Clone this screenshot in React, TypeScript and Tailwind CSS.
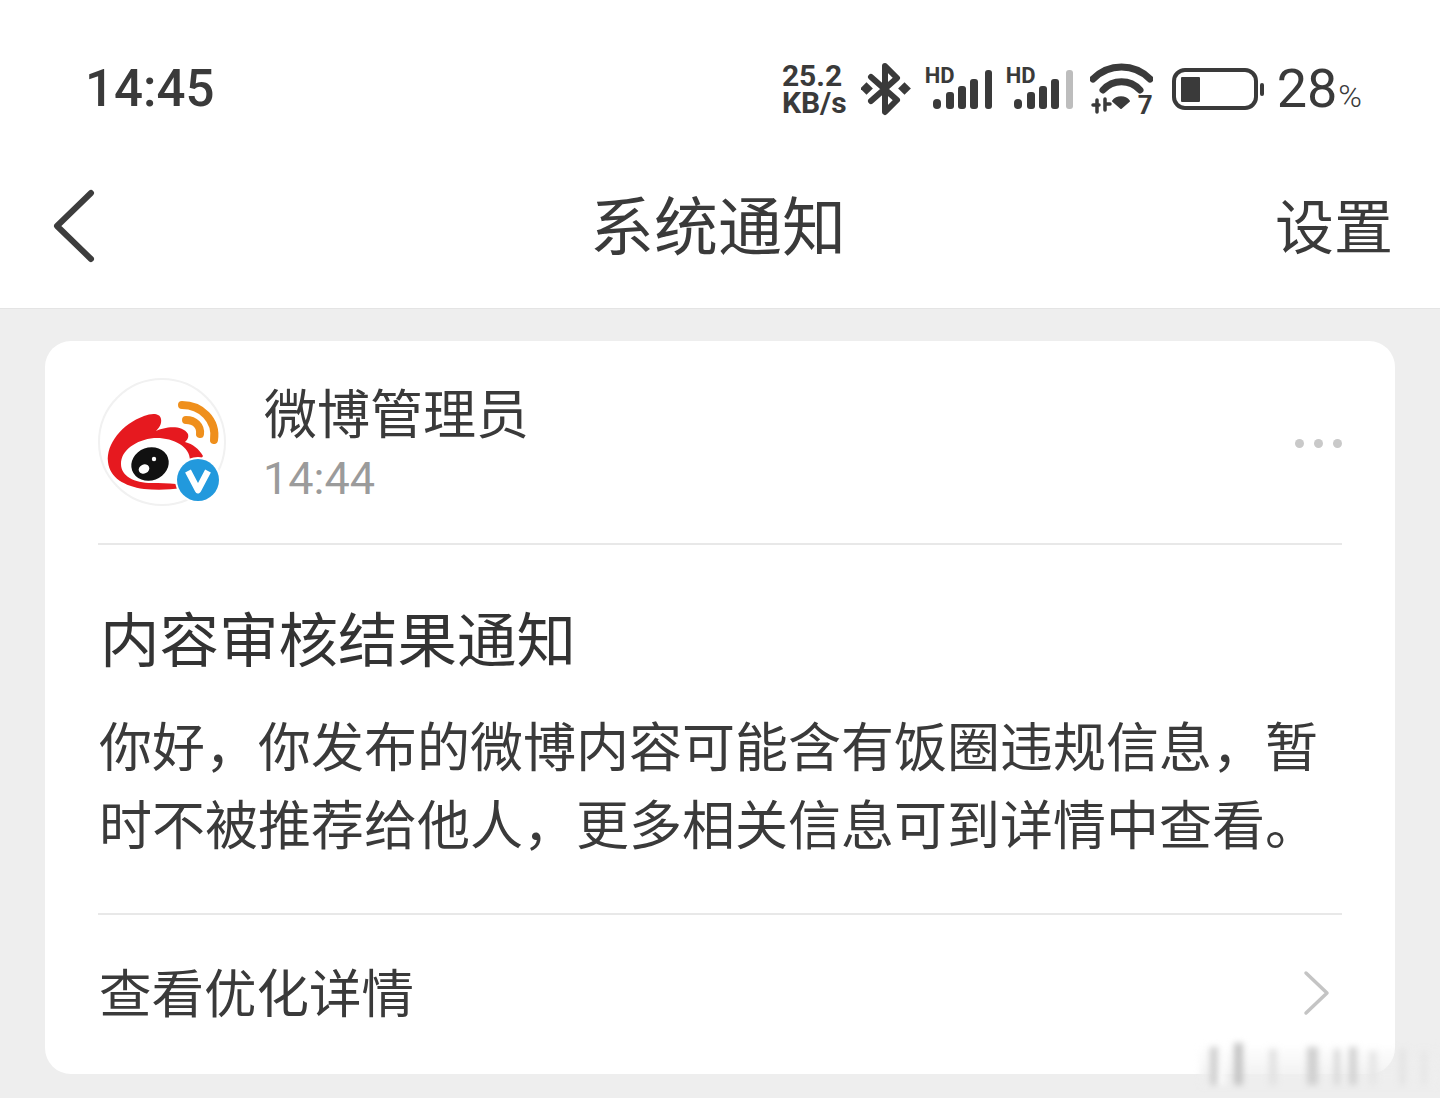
const cjk = "font-['Noto_Sans_CJK_SC','Noto_Sans',sans-serif]";

function Signal({ lastGray }: { lastGray?: boolean }) {
  return (
    <div className="relative h-[48px] w-[70px]">
      <span className="absolute left-0 top-0 font-['Roboto',sans-serif] text-[22px] font-bold leading-[22px] text-[#3a3a3a]">HD</span>
      <svg className="absolute inset-0" width="70" height="48" viewBox="0 0 70 48">
        <rect x="8" y="34" width="8" height="10" rx="4" fill="#3a3a3a" />
        <rect x="21" y="27" width="8" height="17" rx="3" fill="#3a3a3a" />
        <rect x="33" y="21" width="8" height="23" rx="3" fill="#3a3a3a" />
        <rect x="45" y="14" width="8" height="30" rx="3" fill="#3a3a3a" />
        <rect x="60" y="5" width="7" height="39" rx="3" fill={lastGray ? "#bdbdbd" : "#3a3a3a"} />
      </svg>
    </div>
  );
}

function StatusBar() {
  return (
    <div className="flex h-[150px] items-center justify-between pl-[85px] pr-[78px] pt-[27px] font-['Roboto',sans-serif] text-[#3a3a3a]">
      <span className="text-[51px] font-medium leading-none">14:45</span>
      <div className="flex items-center">
        <span className="text-[30px] font-bold leading-[27px]">25.2<br />KB/s</span>
        <svg className="ml-[14px]" width="50" height="54" viewBox="0 0 50 54" fill="none">
          <path d="M10 15 L36 38 L24 50 V4 L36 16 L10 39" stroke="#3a3a3a" strokeWidth="6" strokeLinejoin="round" strokeLinecap="round" />
          <rect x="1" y="22" width="9" height="9" transform="rotate(45 5.5 26.5)" fill="#3a3a3a" />
          <rect x="39" y="22" width="9" height="9" transform="rotate(45 43.5 26.5)" fill="#3a3a3a" />
        </svg>
        <div className="ml-[14px]"><Signal /></div>
        <div className="ml-[11px]"><Signal lastGray /></div>
        <div className="relative ml-[14px] h-[52px] w-[63px]">
          <svg width="63" height="52" viewBox="0 0 63 52" fill="none">
            <path d="M3 16 C19 0 44 0 60 16" stroke="#3a3a3a" strokeWidth="7" strokeLinecap="round" />
            <path d="M13 27 C23 16 40 16 50 27" stroke="#3a3a3a" strokeWidth="7" strokeLinecap="round" />
            <path d="M23 38 C27 33 35 33 39 38 L31 45 Z" fill="#3a3a3a" stroke="#3a3a3a" strokeWidth="2" strokeLinejoin="round" />
            <path d="M3 42 H9 M7 37 V49 M15 36 V47 M15 41 H20" stroke="#3a3a3a" strokeWidth="3.5" strokeLinecap="round" />
          </svg>
          <span className="absolute bottom-[-3px] right-0 text-[26px] font-bold leading-[26px]">7</span>
        </div>
        <svg className="ml-[19px]" width="92" height="42" viewBox="0 0 92 42" fill="none">
          <rect x="2" y="2" width="82" height="38" rx="11" stroke="#3a3a3a" strokeWidth="4" />
          <rect x="9" y="9" width="19" height="25" rx="1" fill="#3a3a3a" />
          <rect x="88" y="15" width="4" height="13" rx="2" fill="#3a3a3a" />
        </svg>
        <div className="ml-[13px] flex items-baseline">
          <span className="text-[54px] leading-none">28</span>
          <span className="ml-[1px] text-[32px] font-light leading-none">%</span>
        </div>
      </div>
    </div>
  );
}

function NavBar() {
  return (
    <div className="relative flex h-[159px] items-center justify-center border-b border-[#e4e4e4] pb-[14px] pr-[4px]">
      <svg className="absolute left-[50px] top-[38px]" width="48" height="76" viewBox="0 0 48 76" fill="none">
        <path d="M41 5 L7 38 L41 71" stroke="#3d3d3d" strokeWidth="6" strokeLinecap="round" strokeLinejoin="round" />
      </svg>
      <span className={`${cjk} text-[64px] leading-none text-[#3a3a3a]`}>系统通知</span>
      <span className={`${cjk} absolute right-[47px] top-[44px] text-[59px] leading-none text-[#3a3a3a]`}>设置</span>
    </div>
  );
}

function WeiboLogo() {
  return (
    <div className="relative mt-[2px] h-[128px] w-[128px] shrink-0 rounded-full border-2 border-[#f1f1f1] bg-white">
      <svg className="absolute left-[-2px] top-[-2px]" width="128" height="128" viewBox="0 0 128 128" fill="none">
        <path d="M10 84 C8 66 24 46 46 38 C54 35 62 35 63 41 C64 46 61 50 58 53 C66 49 84 46 90 56 C91 60 89 62 87 64 C95 66 101 71 105 78 L84 110 C70 112 58 112 46 111 C26 108 12 100 10 84 Z" fill="#e6191f" />
        <path d="M23 86 C23 72 38 62 56 60 C74 59 92 68 92 82 L78 106 C70 105 62 105 54 105 C36 105 23 98 23 86 Z" fill="#fff" />
        <ellipse cx="52" cy="86" rx="19" ry="16.5" transform="rotate(-20 52 86)" fill="#111" />
        <ellipse cx="46" cy="91" rx="5.5" ry="4.5" transform="rotate(-25 46 91)" fill="#fff" />
        <circle cx="56" cy="81" r="2.2" fill="#fff" />
        <path d="M84 27 C103 27 119 42 116 62" stroke="#ef8f1c" strokeWidth="8" strokeLinecap="round" />
        <path d="M88 42 C97 42 103 48 102 56" stroke="#ef8f1c" strokeWidth="8" strokeLinecap="round" />
        <circle cx="100" cy="102" r="23" fill="#fff" />
        <circle cx="100" cy="102" r="21" fill="#2299dd" />
        <path d="M90 93 L100 112 L110 93" stroke="#fff" strokeWidth="6.5" strokeLinejoin="round" />
      </svg>
    </div>
  );
}

function MessageCard() {
  return (
    <div className="mx-[45px] mt-[32px] h-[733px] rounded-[26px] bg-white px-[53px]">
      <div className="flex h-[204px] items-center border-b-2 border-[#e8e8e8] pb-[3px]">
        <WeiboLogo />
        <div className="ml-[38px] flex flex-col pt-[16px]">
          <span className={`${cjk} text-[53px] leading-[60px] text-[#3a3a3a]`}>微博管理员</span>
          <span className="ml-[-1px] font-['Roboto',sans-serif] text-[45px] leading-[76px] text-[#9b9b9b]">14:44</span>
        </div>
        <div className="ml-auto mt-[6px] flex gap-[10px]">
          <span className="h-[9px] w-[9px] rounded-full bg-[#c9c9c9]" />
          <span className="h-[9px] w-[9px] rounded-full bg-[#c9c9c9]" />
          <span className="h-[9px] w-[9px] rounded-full bg-[#c9c9c9]" />
        </div>
      </div>
      <div className="h-[370px] border-b-2 border-[#e8e8e8] pt-[51px]">
        <h1 className={`${cjk} pl-[2px] text-[59.5px] font-normal leading-[80px] text-[#333]`}>内容审核结果通知</h1>
        <p className={`${cjk} mt-[29px] w-[1240px] pl-[1px] text-[53px] leading-[78px] text-[#3a3a3a]`}>
          你好，你发布的微博内容可能含有饭圈违规信息，暂时不被推荐给他人，更多相关信息可到详情中查看。
        </p>
      </div>
      <div className="flex h-[157px] items-center justify-between pb-[6px] pl-[1px] pr-[11px]">
        <span className={`${cjk} text-[52.5px] leading-none text-[#3a3a3a]`}>查看优化详情</span>
        <svg className="mt-[4px]" width="28" height="46" viewBox="0 0 28 46" fill="none">
          <path d="M3 3 L24 23 L3 43" stroke="#c4c4c4" strokeWidth="3.5" strokeLinecap="round" strokeLinejoin="round" />
        </svg>
      </div>
    </div>
  );
}

export default function App() {
  return (
    <div className="relative h-[1098px] w-[1440px] overflow-hidden bg-[#eeeeee]">
      <div className="bg-white">
        <StatusBar />
        <NavBar />
      </div>
      <MessageCard />
      {/* blurred watermark, bottom right */}
      <div className="absolute left-[1200px] top-[1044px] flex h-[42px] w-[240px] items-end bg-gradient-to-b from-transparent to-[#eeeeee] pb-[1px] blur-[3px]">
        <span className="ml-[10px] h-[38px] w-[8px] bg-[#cfcfcf]" />
        <span className="h-[38px] w-[6px] bg-white" />
        <span className="ml-[10px] h-[42px] w-[9px] bg-[#c4c4c4]" />
        <span className="ml-[26px] h-[36px] w-[8px] bg-[#e2e2e2]" />
        <span className="ml-[30px] h-[38px] w-[11px] bg-[#d0d0d0]" />
        <span className="ml-[16px] h-[36px] w-[6px] bg-[#d8d8d8]" />
        <span className="ml-[9px] h-[38px] w-[8px] bg-[#d2d2d2]" />
        <span className="ml-[12px] h-[34px] w-[8px] bg-[#e6e6e6]" />
        <span className="ml-[22px] h-[36px] w-[7px] bg-[#e4e4e4]" />
        <span className="ml-[15px] h-[34px] w-[6px] bg-[#e6e6e6]" />
      </div>
    </div>
  );
}
